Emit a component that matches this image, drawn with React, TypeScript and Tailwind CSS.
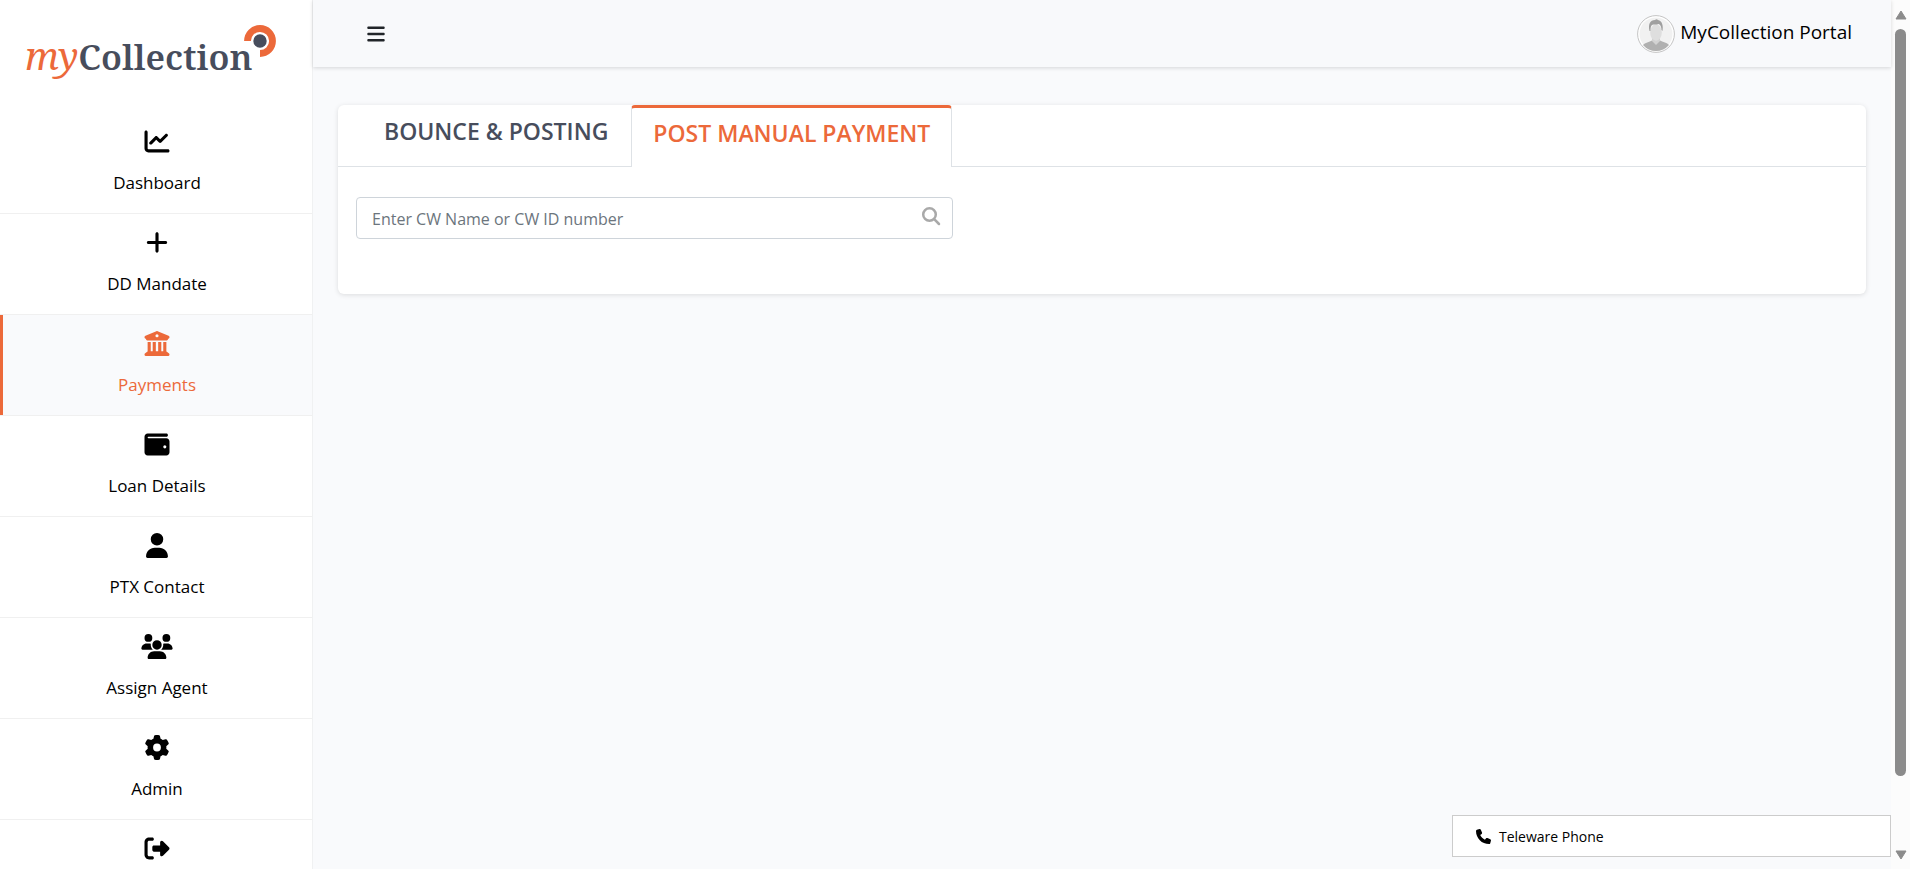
import React from "react";
import type { IconType } from "react-icons";
import {
  FaBars, FaBuildingColumns, FaChartLine, FaGear, FaPhone, FaPlus,
  FaRightFromBracket, FaUser, FaUsers, FaWallet,
} from "react-icons/fa6";

type NavItem = { label: string; icon: IconType; active?: boolean; iconOnly?: boolean };

const navItems: NavItem[] = [
  { label: "Dashboard", icon: FaChartLine },
  { label: "DD Mandate", icon: FaPlus },
  { label: "Payments", icon: FaBuildingColumns, active: true },
  { label: "Loan Details", icon: FaWallet },
  { label: "PTX Contact", icon: FaUser },
  { label: "Assign Agent", icon: FaUsers },
  { label: "Admin", icon: FaGear },
  { label: "Logout", icon: FaRightFromBracket, iconOnly: true },
];

function Logo() {
  return (
    <a href="#" aria-label="myCollection" className="flex h-[113px] shrink-0 items-start pl-[25px] pt-6">
      <span className="pt-[9px] font-['Noto_Serif','Liberation_Serif',serif] text-[35px] leading-[44px] text-[#474d5c]">
        <span className="text-[38px] italic text-[#ec693a]">my</span>
        <span className="font-semibold">Collection</span>
      </span>
      <svg className="-ml-2.5 shrink-0" width="34" height="34" viewBox="0 0 34 34" aria-hidden="true">
        <path d="M4.500 17A12.500 12.500 0 1 1 17 29.500" fill="none" stroke="#ec693a" strokeWidth="6.800" />
        <circle cx="17" cy="17" r="6.700" fill="#474d5c" />
      </svg>
    </a>
  );
}

function Sidebar() {
  return (
    <aside className="flex w-[313px] shrink-0 flex-col overflow-hidden border-r border-[#f0f1f2] bg-white">
      <Logo />
      <nav>
        <ul>
          {navItems.map(({ label, icon: Icon, active, iconOnly }) => (
            <li key={label} className="border-b border-[#f0f0f0]">
              <a
                href="#"
                aria-label={label}
                className={
                  active
                    ? "flex h-[100px] flex-col items-center border-l-[3px] border-[#ec693a] bg-[#f9fafc] pr-px pt-4 text-[#ec693a]"
                    : "flex h-[100px] flex-col items-center pl-0.5 pt-4 text-black"
                }
              >
                <Icon className="h-[25px] w-8 shrink-0" aria-hidden="true" />
                {!iconOnly && <span className="mt-4 text-[17px] leading-[26px]">{label}</span>}
              </a>
            </li>
          ))}
        </ul>
      </nav>
    </aside>
  );
}

function Avatar() {
  return (
    <svg width="38" height="38" viewBox="0 0 38 38" aria-hidden="true">
      <circle cx="19" cy="19" r="18.4" fill="#fff" stroke="#c4c4c4" />
      <circle cx="19" cy="19" r="16.5" fill="#f1f1f1" />
      <path d="M6 30c3-3 7-3 9.500-5h7c2.500 2 7 2 9.500 5a17 17 0 0 1-26 0z" fill="#b0b0b0" />
      <path d="M15 22h8v4l-4 4-4-4z" fill="#d2d2d2" />
      <ellipse cx="19" cy="17.500" rx="5.800" ry="8.200" fill="#dedede" />
      <path d="M12.500 16C11 9 13 5 18 5c1-1 2-1 3 0 4 1 5.500 5 4.500 11l-1-1c0-4-2-6-3-6-2 1-5 0-6.500 1-1.500 1-1.500 4-1.500 6z" fill="#9f9f9f" />
    </svg>
  );
}

function Header() {
  return (
    <header className="flex h-[67px] shrink-0 items-center justify-between bg-[#f8f9fb] pl-[53px] pr-[39px] shadow-[0_1px_4px_rgba(0,0,0,0.15)]">
      <button type="button" aria-label="Toggle menu" className="text-[#212529]">
        <FaBars size={20} />
      </button>
      <a href="#" className="flex items-center gap-[5px] text-[19px] leading-6 text-black">
        <Avatar />
        <span className="pb-1">MyCollection Portal</span>
      </a>
    </header>
  );
}

function PaymentCard() {
  return (
    <section className="mx-[25px] mt-[38px] rounded-md bg-white pb-[55px] shadow-[0_1px_5px_rgba(0,0,0,0.12)]">
      <div role="tablist" className="flex h-[62px] border-b border-[#dee2e6] pl-[46px]">
        <button type="button" role="tab" aria-selected="false" className="flex h-[62px] items-start pr-[23px] pt-3 text-[23px] font-semibold leading-7 text-[#474d5c]">
          BOUNCE &amp; POSTING
        </button>
        <button type="button" role="tab" aria-selected="true" className="flex h-[62px] items-start rounded-t border-x border-t-[3px] border-x-[#dee2e6] border-t-[#ec693a] bg-white px-[21px] pt-[11px] text-[23px] font-semibold leading-7 text-[#ec693a]">
          POST MANUAL PAYMENT
        </button>
      </div>
      <div className="ml-[18px] mt-[30px] flex h-[42px] w-[597px] items-center rounded border border-[#ced4da] pl-[15px] pr-[11px]">
        <input
          type="text"
          aria-label="CW name or CW ID number"
          placeholder="Enter CW Name or CW ID number"
          className="min-w-0 flex-1 bg-transparent pt-0.5 text-[16px] outline-none placeholder:text-[#6c757d]"
        />
        <svg className="mb-1" width="20" height="20" viewBox="0 0 20 20" aria-hidden="true" fill="none" stroke="#a9a9a9" strokeWidth="2.500">
          <circle cx="8.500" cy="8.500" r="6.300" />
          <path d="M13.200 13.200 18 18" strokeLinecap="round" />
        </svg>
      </div>
    </section>
  );
}

function PageScrollbar() {
  return (
    <div aria-hidden="true" className="flex w-[19px] shrink-0 flex-col items-center bg-[#fcfcfc] pb-[9px] pt-2.5">
      <svg width="12" height="10" viewBox="0 0 12 10"><path d="M6 1 11 9H1z" fill="#8b8b8b" stroke="#8b8b8b" strokeLinejoin="round" /></svg>
      <div className="mt-[9px] flex min-h-0 flex-1 flex-col">
        <div className="h-[91%] w-[11px] rounded-full bg-[#8b8b8b]" />
      </div>
      <svg width="12" height="10" viewBox="0 0 12 10"><path d="M6 9 11 1H1z" fill="#8b8b8b" stroke="#8b8b8b" strokeLinejoin="round" /></svg>
    </div>
  );
}

export default function App() {
  return (
    <div className="flex h-screen overflow-hidden bg-[#f9fafc] font-['Segoe_UI','Open_Sans',sans-serif]">
      <Sidebar />
      <div className="relative flex min-w-0 flex-1 flex-col">
        <Header />
        <main>
          <PaymentCard />
        </main>
        <button type="button" className="absolute bottom-3 right-0 flex h-[42px] w-[439px] items-center gap-2 border border-[#ccc] bg-white px-[23px] text-[14px] text-black">
          <FaPhone size={15} aria-hidden="true" />
          Teleware Phone
        </button>
      </div>
      <PageScrollbar />
    </div>
  );
}
